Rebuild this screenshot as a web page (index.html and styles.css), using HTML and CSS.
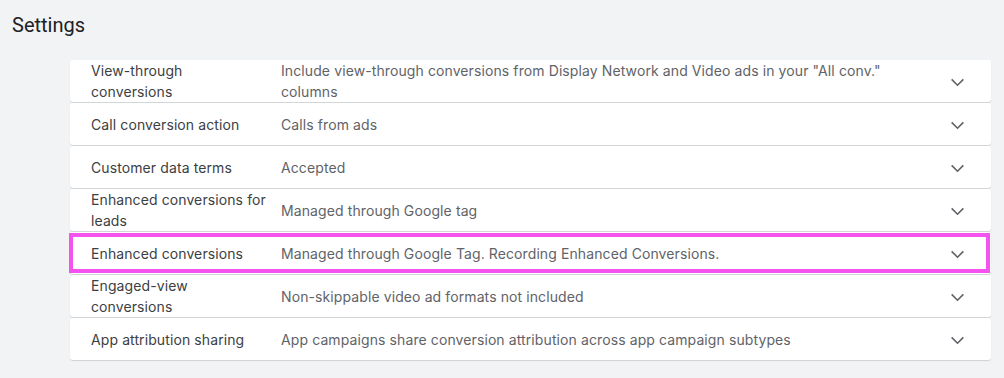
FILE: index.html
```html
<!DOCTYPE html>
<html lang="en">
<head>
    <meta charset="UTF-8">
    <meta name="viewport" content="width=device-width, initial-scale=1.0">
    <title>Settings</title>
    <link rel="stylesheet" href="styles.css">
</head>
<body>
<div class="page">
    <h1 class="page-title">Settings</h1>
    <div class="settings-list">
        <div class="setting-row">
            <div class="setting-name">View-through conversions</div>
            <div class="setting-value">Include view-through conversions from Display Network and Video ads in your "All conv." columns</div>
            <div class="setting-toggle">
                <svg width="16" height="10" viewBox="0 0 16 10"><polyline points="1.5,1.5 8,8 14.5,1.5"/></svg>
            </div>
        </div>
        <div class="setting-row">
            <div class="setting-name">Call conversion action</div>
            <div class="setting-value">Calls from ads</div>
            <div class="setting-toggle">
                <svg width="16" height="10" viewBox="0 0 16 10"><polyline points="1.5,1.5 8,8 14.5,1.5"/></svg>
            </div>
        </div>
        <div class="setting-row">
            <div class="setting-name">Customer data terms</div>
            <div class="setting-value">Accepted</div>
            <div class="setting-toggle">
                <svg width="16" height="10" viewBox="0 0 16 10"><polyline points="1.5,1.5 8,8 14.5,1.5"/></svg>
            </div>
        </div>
        <div class="setting-row">
            <div class="setting-name">Enhanced conversions for leads</div>
            <div class="setting-value">Managed through Google tag</div>
            <div class="setting-toggle">
                <svg width="16" height="10" viewBox="0 0 16 10"><polyline points="1.5,1.5 8,8 14.5,1.5"/></svg>
            </div>
        </div>
        <div class="setting-row highlighted">
            <div class="setting-name">Enhanced conversions</div>
            <div class="setting-value">Managed through Google Tag. Recording Enhanced Conversions.</div>
            <div class="setting-toggle">
                <svg width="16" height="10" viewBox="0 0 16 10"><polyline points="1.5,1.5 8,8 14.5,1.5"/></svg>
            </div>
        </div>
        <div class="setting-row">
            <div class="setting-name">Engaged-view conversions</div>
            <div class="setting-value">Non-skippable video ad formats not included</div>
            <div class="setting-toggle">
                <svg width="16" height="10" viewBox="0 0 16 10"><polyline points="1.5,1.5 8,8 14.5,1.5"/></svg>
            </div>
        </div>
        <div class="setting-row">
            <div class="setting-name">App attribution sharing</div>
            <div class="setting-value">App campaigns share conversion attribution across app campaign subtypes</div>
            <div class="setting-toggle">
                <svg width="16" height="10" viewBox="0 0 16 10"><polyline points="1.5,1.5 8,8 14.5,1.5"/></svg>
            </div>
        </div>
    </div>
</div>
</body>
</html>
```

FILE: styles.css
```css
body {
    margin: 0;
    background-color: #f1f3f4;
    font-family: Inter, Roboto, "Liberation Sans", Arial, sans-serif;
}
.page {
    padding: 11px 13px 16px 12px;
}
.page-title {
    margin: 0 0 21px 0;
    font-family: Roboto, "Liberation Sans", Arial, sans-serif;
    font-size: 20px;
    line-height: 28px;
    font-weight: 400;
    color: #202124;
}
.settings-list {
    margin-left: 58px;
    display: flex;
    flex-direction: column;
    gap: 1px;
}
.setting-row {
    position: relative;
    display: flex;
    align-items: center;
    height: 42px;
    padding-left: 21px;
    background-color: #fff;
    border-radius: 3px;
    box-shadow: 0 1px 1px rgba(60, 64, 67, 0.18);
    font-size: 14px;
    line-height: 21px;
    letter-spacing: 0.1px;
}
.setting-name {
    width: 176px;
    margin-right: 14px;
    color: #3c4043;
}
.setting-value {
    flex: 1;
    max-width: 620px;
    color: #5f6368;
}
.setting-toggle {
    margin-left: auto;
    width: 16px;
    height: 10px;
    margin-top: 3px;
    margin-right: 25px;
}
.setting-toggle svg {
    display: block;
    width: 15px;
    height: 9px;
    fill: none;
    stroke: #5f6368;
    stroke-width: 1.8;
}
.setting-row.highlighted::after {
    content: '';
    position: absolute;
    top: 1px;
    bottom: 1px;
    left: -1px;
    right: 1px;
    border: 4px solid #f553ef;
}
```
